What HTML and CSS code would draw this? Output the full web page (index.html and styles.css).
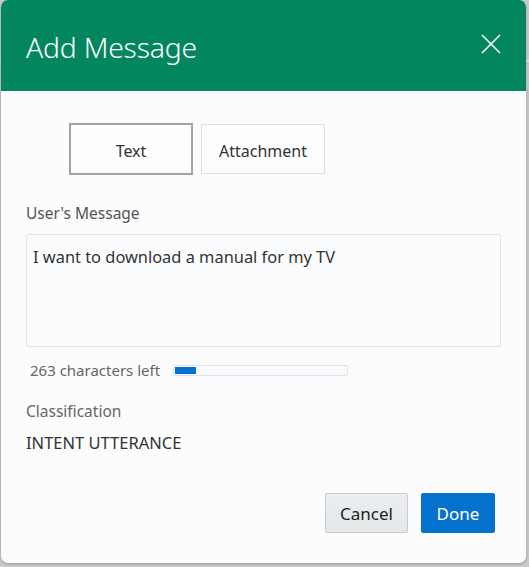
FILE: index.html
```html
<!DOCTYPE html>
<html>
<head>
<meta charset="utf-8">
<link rel="stylesheet" href="styles.css">
</head>
<body>
<div class="backdrop">
  <div class="dialog">
    <div class="header">
      <h1 class="title">Add Message</h1>
      <button class="close" aria-label="Close">
        <svg width="20" height="20" viewBox="0 0 20 20"><path d="M1 1L19 19M19 1L1 19" stroke="#fff" stroke-width="1.6" fill="none"/></svg>
      </button>
    </div>
    <div class="body">
      <div class="tabs">
        <button class="tab tab-active">Text</button>
        <button class="tab">Attachment</button>
      </div>
      <div class="label">User's Message</div>
      <div class="textarea">I want to download a manual for my TV</div>
      <div class="counter">
        <span class="counter-text">263 characters left</span>
        <div class="bar"><div class="bar-fill" style="width:21px"></div></div>
      </div>
      <div class="label label-class">Classification</div>
      <div class="value">INTENT UTTERANCE</div>
      <div class="footer">
        <button class="btn btn-cancel">Cancel</button>
        <button class="btn btn-done">Done</button>
      </div>
    </div>
  </div>
</div>
</body>
</html>
```
FILE: styles.css
```css
html, body {
  margin: 0;
  padding: 0;
}
body {
  background: #c8c8c8;
  font-family: "Noto Sans", "Open Sans", sans-serif;
  width: 529px;
  height: 567px;
  overflow: hidden;
}
.backdrop {
  padding-left: 1px;
  background: linear-gradient(#cbcbcb 0 60px, #dedede 60px 62px, #c9c9c9 62px);
  height: 567px;
}
.dialog {
  width: 525px;
  height: 563px;
  background: #fcfcfd;
  border-radius: 7px;
  overflow: hidden;
  box-shadow: 0 1px 3px rgba(0,0,0,0.25);
  display: flex;
  flex-direction: column;
}
.header {
  height: 91px;
  flex: none;
  background: #03865e;
  display: flex;
  align-items: center;
  justify-content: space-between;
  padding: 2px 25px 0 25px;
  box-sizing: border-box;
}
.title {
  margin: 0;
  font-weight: 300;
  font-size: 28.3px;
  color: #fff;
  letter-spacing: -0.2px;
}
.close {
  background: none;
  border: 0;
  padding: 0;
  width: 20px;
  height: 20px;
  margin-top: -6px;
  display: flex;
}
.body {
  padding: 32px 25px 0 25px;
  display: flex;
  flex-direction: column;
}
.tabs {
  display: flex;
  align-items: center;
  gap: 8px;
  padding-left: 43px;
}
.tab {
  font-family: inherit;
  font-size: 16px;
  color: #333;
  background: #fdfdfe;
  height: 50px;
  width: 124px;
  border: 1px solid #d7e0e9;
  padding: 3px 0 0;
}
.tab-active {
  height: 52px;
  width: 124px;
  border: 2px solid #a3a3a3;
  background: #fefefe;
}
.label {
  margin-top: 27px;
  font-size: 15.5px;
  line-height: 22px;
  color: #555;
}
.textarea {
  margin-top: 10px;
  height: 113px;
  box-sizing: border-box;
  border: 1px solid #dfe3e8;
  border-radius: 2px;
  background: #fbfcfe;
  padding: 9px 6px;
  font-size: 16.4px;
  line-height: 26px;
  color: #333;
}
.counter {
  display: flex;
  align-items: center;
  margin-top: 13px;
  padding-left: 4px;
  gap: 13px;
}
.counter-text {
  font-size: 15px;
  color: #666;
  line-height: 20px;
}
.bar {
  width: 175px;
  height: 11px;
  box-sizing: border-box;
  border: 1px solid #dce2e8;
  border-radius: 2px;
  background: #f8fafd;
  padding: 1px;
  display: flex;
}
.bar-fill {
  background: #0572ce;
  height: 100%;
}
.label-class {
  margin-top: 20px;
  color: #666;
}
.value {
  margin-top: 10px;
  font-size: 16.5px;
  line-height: 22px;
  color: #333;
}
.footer {
  display: flex;
  justify-content: flex-end;
  gap: 13px;
  margin-top: 39px;
  padding-right: 6px;
}
.btn {
  font-family: inherit;
  font-size: 17px;
  height: 40px;
  border-radius: 2px;
  padding: 0;
}
.btn-cancel {
  width: 83px;
  color: #222;
  background: linear-gradient(#eceef1, #e4e8eb);
  border: 1px solid #c4ced7;
}
.btn-done {
  width: 74px;
  color: #fff;
  background: #0572ce;
  border: 1px solid #0572ce;
}
```
